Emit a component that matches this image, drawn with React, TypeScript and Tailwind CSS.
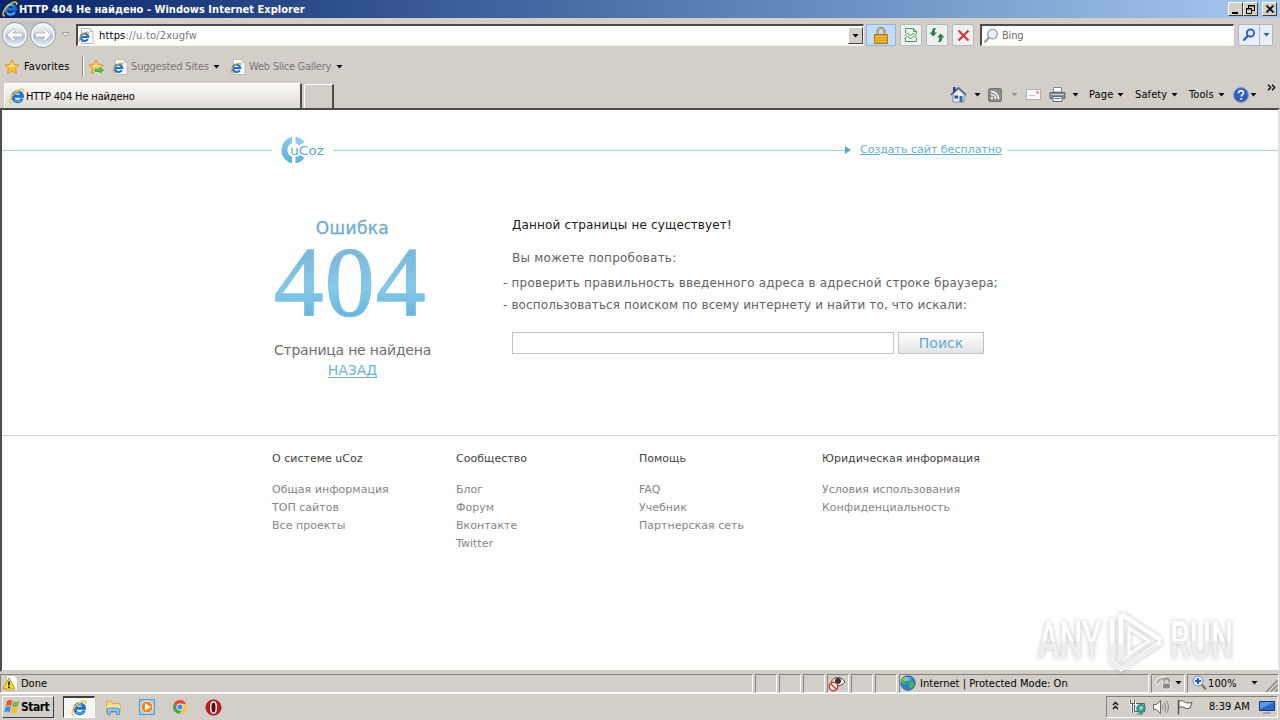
import React from 'react';
import clsx from 'clsx';

function Arrow({ className }: { className?: string }) {
  return (
    <svg width="7" height="4" viewBox="0 0 7 4" className={clsx('shrink-0', className)} fill="currentColor">
      <path d="M0.5 0h6L3.5 3.5z" />
    </svg>
  );
}

function IeLogo({ size = 16, className }: { size?: number; className?: string }) {
  return (
    <svg width={size} height={size} viewBox="0 0 16 16" fill="none" className={clsx('shrink-0', className)}>
      <path d="M13.200 10.500a4.900 4.900 0 1 1 .3-2.300H4.500" stroke="#1d6fd2" strokeWidth="3" />
      <path d="M12.300 11.600a4.600 4.600 0 0 1-7 .5M5 5.500a4.600 4.600 0 0 1 6-1" stroke="#5cc0fa" strokeWidth="1.200" />
      <path d="M2.800 15C.2 14.800.6 11.400 3.300 7.600 6.200 3.600 11.800.2 14 1.300c1.100.6.9 1.600.4 2.600" stroke="#f2c43a" strokeWidth="1.500" />
    </svg>
  );
}

function IePage() {
  return (
    <svg width="16" height="16" viewBox="0 0 16 16" fill="none" className="shrink-0">
      <path d="M3.500.5h8.500l3 3v12H3.500z" fill="#fff" stroke="#b4bccb" />
      <path d="M12 .5v3h3" stroke="#b4bccb" />
      <path d="M9.800 11a3.700 3.700 0 1 1 .4-2H3.600" stroke="#1c6fd0" strokeWidth="2.200" />
      <path d="M2 13.500c-1.800 0-1-2.800 1-5.200 2.200-2.800 5.800-4.600 7.300-4 .8.3.7 1.200.3 2" stroke="#e0a82c" strokeWidth="1.100" />
    </svg>
  );
}

function Star({ plus = false }: { plus?: boolean }) {
  return (
    <svg width="17" height="16" viewBox="0 0 17 16" className="shrink-0">
      <path
        d="M8 .8l2.200 4.700 5 .6-3.700 3.500 1 5.100L8 12.200l-4.500 2.500 1-5.100L.8 6.100l5-.6z"
        fill="#fcbf35"
        stroke="#dc9a2a"
        strokeLinejoin="round"
      />
      <path d="M8 3l1.300 3.300 3.200.4-6.500 1.500L4 6.700l2.800-.4z" fill="#fff0a0" />
      {plus && <path d="M6.500 9.500h5V7l5 4.200-5 4.300V13h-5z" fill="#58c850" stroke="#fff" strokeWidth=".8" />}
      {plus && <path d="M7 10h5V8.200l3.600 3-3.600 3.100v-1.800H7z" fill="none" stroke="#2c8c28" strokeWidth=".7" />}
    </svg>
  );
}

function NavCircle({ flip = false }: { flip?: boolean }) {
  return (
    <svg width="28" height="28" viewBox="0 0 28 28" className={clsx('shrink-0', flip && '-scale-x-100')}>
      <defs>
        <linearGradient id="nav" x1="0" y1="0" x2="0" y2="1">
          <stop offset="0" stopColor="#f4f7fb" />
          <stop offset=".45" stopColor="#d3dbe6" />
          <stop offset=".55" stopColor="#b0bfd2" />
          <stop offset="1" stopColor="#e2f3fc" />
        </linearGradient>
      </defs>
      <circle cx="14" cy="14" r="12.500" fill="#eceff4" stroke="#8d97a8" strokeWidth=".9" />
      <circle cx="14" cy="14" r="10.800" fill="url(#nav)" stroke="#fff" />
      <path d="M6 14l6.500-6.500 2 2-2.500 2.500H21.500v4H12l2.500 2.500-2 2z" fill="#fff" stroke="#a3afc0" strokeWidth=".8" />
    </svg>
  );
}

function CaptionButton({ children }: { children: React.ReactNode }) {
  return (
    <div className="flex h-[14px] w-[15px] items-center justify-center border border-t-white border-l-white border-r-[#404040] border-b-[#404040] bg-[#d4d0c8]">
      {children}
    </div>
  );
}

function ToolButton({ children }: { children: React.ReactNode }) {
  return (
    <div className="mr-1 flex h-[22px] w-[22px] items-center justify-center rounded-[2px] border border-[#b3b9c1] bg-[#eef1f3]">
      {children}
    </div>
  );
}

function TitleBar() {
  return (
    <div className="flex h-[18px] shrink-0 items-center bg-linear-to-r from-[#0a246a] to-[#a6caf0] pr-[3px] pl-[2px]">
      <IeLogo size={16} />
      <span className="ml-px grow pt-px text-[11px] font-bold tracking-[0.02px] whitespace-nowrap text-white">
        HTTP 404 Не найдено - Windows Internet Explorer
      </span>
      <CaptionButton>
        <span className="mt-[7px] mr-[2px] h-[2px] w-[6px] bg-black" />
      </CaptionButton>
      <CaptionButton>
        <svg width="9" height="9" viewBox="0 0 9 9" fill="none" stroke="#000">
          <path d="M2.500 3V.5h6v5H6M2 1h7M.5 3.500h5v5h-5zM0 4h6" />
        </svg>
      </CaptionButton>
      <div className="w-[4px]" />
      <CaptionButton>
        <svg width="8" height="8" viewBox="0 0 8 8" stroke="#000" strokeWidth="1.600">
          <path d="M.5.5l7 7M7.500.5l-7 7" />
        </svg>
      </CaptionButton>
    </div>
  );
}

function AddressRow() {
  return (
    <div className="flex h-[34px] shrink-0 items-center pl-[1px]">
      <div className="flex h-[28px] rounded-[14px] bg-linear-to-b from-[#bfc0c6] to-[#d4cec8] to-60%">
        <NavCircle />
        <NavCircle flip />
      </div>
      <svg width="9" height="6" viewBox="0 0 9 6" className="ml-[4px]" fill="#e8e6e2" stroke="#a5a29c">
        <path d="M1 .5h7L4.500 4.500z" />
      </svg>
      <div className="ml-[6px] flex h-[22px] w-[788px] items-center border-t-2 border-r border-b border-l-2 border-t-[#4b4b4b] border-r-[#f4f3f0] border-b-[#f4f3f0] border-l-[#4b4b4b] bg-white">
        <span className="w-[21px]">
          <IePage />
        </span>
        <span className="grow pt-px tracking-[0.2px] text-[#777]">
          <span className="text-black">https</span>://u.to/2xugfw
        </span>
        <span className="flex h-[17px] w-[15px] items-center justify-center border border-t-white border-l-white border-r-[#404040] border-b-[#404040] bg-[#d4d0c8]">
          <Arrow />
        </span>
      </div>
      <div className="mr-1 ml-[2px] flex h-[22px] w-[30px] items-center justify-center border border-[#8fb2e8] bg-[#c5dcfd]">
        <svg width="14" height="17" viewBox="0 0 14 17">
          <path d="M3.500 8V4.500a3.500 3.500 0 0 1 7 0V8" fill="none" stroke="#8a7a4a" strokeWidth="2.200" />
          <path d="M3.500 8V4.500a3.500 3.500 0 0 1 7 0V8" fill="none" stroke="#e8dcae" strokeWidth=".7" />
          <path d="M.5 7.500h13v9H.5z" fill="#dc9f1c" stroke="#b87b0c" />
          <path d="M1 9.500h12M1 12h12M1 14.500h12" stroke="#f6cb5c" strokeWidth=".8" />
        </svg>
      </div>
      <ToolButton>
        <svg width="14" height="16" viewBox="0 0 14 16" fill="none" stroke="#4c9a55">
          <path d="M1.500 6V1.500h8l3 3V7M1.500 11v3.500h11V12M9.500 1.500v3h3" />
          <path d="M.5 9l3-3 3 3 3-3 3.500 3.500M.5 12l3-3 3 3 3-3 3.500 3" />
        </svg>
      </ToolButton>
      <ToolButton>
        <svg width="16" height="14" viewBox="0 0 16 14" fill="#2f8040">
          <path d="M5 0h2.200C5.500 1.500 5.800 3 5.800 4.500H8L4.300 8.500 .5 4.500h2.300C2.800 2.500 3.200 1 5 0z" />
          <path d="M11 14H8.800c1.700-1.500 1.400-3 1.400-4.500H8l3.700-4 3.800 4h-2.300c0 2-.4 3.500-2.200 4.500z" />
        </svg>
      </ToolButton>
      <ToolButton>
        <svg width="13" height="13" viewBox="0 0 13 13" stroke="#d03a3e" strokeWidth="2.200">
          <path d="M1.500 1.500l10 10M11.500 1.500l-10 10" />
        </svg>
      </ToolButton>
      <div className="ml-[2px] flex h-[22px] w-[254px] items-center border-t-2 border-r border-b border-l-2 border-t-[#4b4b4b] border-r-[#f4f3f0] border-b-[#f4f3f0] border-l-[#4b4b4b] bg-white pl-[1px]">
        <svg width="16" height="16" viewBox="0 0 16 16" fill="none">
          <circle cx="9.500" cy="6" r="4.800" fill="#e8f0f8" stroke="#8e99a8" strokeWidth="1.300" />
          <path d="M6 9.500L1.500 14.500" stroke="#8e99a8" strokeWidth="2" />
        </svg>
        <span className="ml-[3px] pt-px tracking-[-0.2px] text-[#6d6d6d]">Bing</span>
      </div>
      <div className="ml-[4px] flex h-[22px] w-[35px] rounded-[2px] border border-[#a9b7cc] bg-[#e9eff8]">
        <span className="flex w-[21px] items-center justify-center border-r border-[#a9b7cc]">
          <svg width="14" height="14" viewBox="0 0 14 14" fill="none" stroke="#2757c8">
            <circle cx="8.500" cy="5" r="3.600" strokeWidth="1.800" fill="#dceaff" />
            <path d="M5.800 7.800L1.500 12.500" strokeWidth="2.200" />
          </svg>
        </span>
        <span className="flex grow items-center justify-center text-[#2566b8]">
          <Arrow />
        </span>
      </div>
    </div>
  );
}

function FavoritesRow() {
  return (
    <div className="flex h-[29px] shrink-0 items-center pl-1">
      <Star />
      <span className="ml-[3px] w-[58px] tracking-[0.1px]">Favorites</span>
      <span className="h-[20px] w-[2px] border-l border-r border-l-[#8f8b84] border-r-white" />
      <span className="ml-[4px] w-[24px]">
        <Star plus />
      </span>
      <IePage />
      <span className="ml-[3px] w-[82px] pt-px tracking-[-0.15px] whitespace-nowrap text-[#7b7874]">Suggested Sites</span>
      <Arrow />
      <span className="ml-[10px]">
        <IePage />
      </span>
      <span className="ml-[3px] w-[87px] pt-px tracking-[-0.25px] whitespace-nowrap text-[#7b7874]">Web Slice Gallery</span>
      <Arrow />
    </div>
  );
}

function CommandBar() {
  return (
    <div className="flex h-[27px] items-center">
      <svg width="17" height="17" viewBox="0 0 17 17" className="shrink-0">
        <path d="M3 8v8h11V8L8.500 3z" fill="#e9eefa" stroke="#7d8cae" />
        <path d="M.8 9L8.500 1.800 16.200 9" fill="none" stroke="#4a64a0" strokeWidth="1.600" />
        <path d="M3 1h2.500v4L3 7z" fill="#2b3c80" />
        <path d="M9.500 10h3v6h-3z" fill="#2f6f9c" />
        <path d="M4.500 9.500h3.500v3H4.500z" fill="#304a80" />
      </svg>
      <Arrow className="ml-[7px]" />
      <svg width="14" height="14" viewBox="0 0 14 14" className="ml-[7px] shrink-0" fill="none" stroke="#fff">
        <rect x=".5" y=".5" width="13" height="13" rx="1.500" fill="#8d8d8d" stroke="#747474" />
        <path d="M3 6.500A4.500 4.500 0 0 1 7.500 11M3 3.500A7.500 7.500 0 0 1 10.500 11" strokeWidth="1.500" />
        <circle cx="4" cy="10" r=".7" fill="#fff" />
      </svg>
      <Arrow className="ml-[9px] text-[#98948d]" />
      <svg width="15" height="11" viewBox="0 0 15 11" className="ml-[8px] shrink-0">
        <path d="M.5.5h14v10H.5z" fill="#fafafa" stroke="#b0aeb0" />
        <path d="M10.500 2.500h2v2h-2z" fill="#d0605c" />
        <path d="M3 6.500h6" stroke="#c4c4c8" />
      </svg>
      <svg width="17" height="15" viewBox="0 0 17 15" className="ml-[8px] shrink-0">
        <path d="M4.500.5h8V5h-8z" fill="#fff" stroke="#888" />
        <path d="M1 5.500h15v6H1z" fill="#8a8e95" stroke="#62666e" />
        <path d="M2 7.500h13" stroke="#c9ccd2" />
        <path d="M4 9.500h9v5H4z" fill="#fff" stroke="#666" />
        <path d="M5.500 11.500h6" stroke="#3972c0" />
      </svg>
      <Arrow className="ml-[6px]" />
      <span className="ml-[10px] w-[28px] tracking-[0.15px]">Page</span>
      <Arrow />
      <span className="ml-[11px] w-[36px] tracking-[0.1px]">Safety</span>
      <Arrow />
      <span className="ml-[11px] w-[29px] tracking-[0.1px]">Tools</span>
      <Arrow />
      <svg width="16" height="16" viewBox="0 0 16 16" className="ml-[8px] shrink-0" fill="none">
        <circle cx="8" cy="8" r="7.400" fill="#2f5fc4" stroke="#8095c4" />
        <path d="M5.500 6.300C5.500 2.800 10.800 3 10.500 6c-.2 1.600-2.300 1.600-2.300 3.600" stroke="#fff" strokeWidth="1.700" />
        <circle cx="8.200" cy="12" r="1.100" fill="#fff" />
      </svg>
      <Arrow className="ml-[1px]" />
      <svg width="9" height="7" viewBox="0 0 9 7" className="mb-[14px] ml-[10px] shrink-0" fill="none" stroke="#000" strokeWidth="1.300">
        <path d="M1 .8l2.700 2.700L1 6.200M5 .8l2.700 2.700L5 6.200" />
      </svg>
    </div>
  );
}

function TabRow() {
  return (
    <div className="flex h-[27px] shrink-0 items-end pl-1">
      <div className="flex h-[25px] w-[298px] items-center border-t border-r-2 border-l border-t-white border-r-[#4b4b4b] border-l-white bg-linear-to-b from-[#fbfaf9] to-[#dedad5] pl-[4px]">
        <IeLogo size={16} />
        <span className="ml-px pt-px tracking-[-0.15px] whitespace-nowrap">HTTP 404 Не найдено</span>
      </div>
      <div className="ml-[2px] h-[24px] w-[30px] border-t border-r-2 border-l border-t-white border-r-[#4b4b4b] border-l-white" />
      <div className="ml-auto w-[330px]">
        <CommandBar />
      </div>
    </div>
  );
}

function UcozLogo() {
  return (
    <svg width="44" height="28" viewBox="0 0 44 28" fill="none">
      <defs>
        <linearGradient id="ring" x1="0" y1="0" x2="0" y2="1">
          <stop offset="0" stopColor="#8fcdea" />
          <stop offset="1" stopColor="#5aaed6" />
        </linearGradient>
      </defs>
      <path d="M11 .8v6.500a7.200 7.200 0 0 0 0 13.400v6.500A13.500 13.500 0 0 1 11 .8z" fill="url(#ring)" />
      <path d="M14.500.8c4 .4 7 2.600 9 5.800l-5.500 3a8 8 0 0 0-3.500-2.500z" fill="#8accea" />
      <path d="M14.500 27.200c4-.4 7-2.600 9-5.800l-5.500-3a8 8 0 0 1-3.500 2.500z" fill="#66b6dc" />
      <text x="9" y="18.500" fontSize="13" fill="#5fa8d3" stroke="#fff" strokeWidth="2.500" paintOrder="stroke" textLength="34" lengthAdjust="spacingAndGlyphs" fontFamily="DejaVu Sans">
        uCoz
      </text>
    </svg>
  );
}

const footerColumns = [
  { title: 'О системе uCoz', width: 'w-[184px]', links: ['Общая информация', 'ТОП сайтов', 'Все проекты'] },
  { title: 'Сообщество', width: 'w-[183px]', links: ['Блог', 'Форум', 'Вконтакте', 'Twitter'] },
  { title: 'Помощь', width: 'w-[183px]', links: ['FAQ', 'Учебник', 'Партнерская сеть'] },
  { title: 'Юридическая информация', width: 'w-[200px]', links: ['Условия использования', 'Конфиденциальность'] },
];

function ErrorPage() {
  return (
    <div className="font-['DejaVu_Sans',sans-serif]">
      <header className="flex h-[40px] items-center">
        <span className="h-px w-[270px] bg-[#a5d3e8]" />
        <span className="mr-[8px] ml-[9px]">
          <UcozLogo />
        </span>
        <span className="h-px w-[512px] bg-[#a5d3e8]" />
        <svg width="6" height="8" viewBox="0 0 6 8" fill="#5ba9cf">
          <path d="M0 0l6 4-6 4z" />
        </svg>
        <a className="mr-[5px] ml-[9px] w-[142px] text-[11px] whitespace-nowrap text-[#5fb0d5] underline underline-offset-1">
          Создать сайт бесплатно
        </a>
        <span className="h-px grow bg-[#a5d3e8]" />
      </header>

      <main className="flex h-[265px] pt-[46px] pl-[270px]">
        <div className="flex w-[161px] shrink-0 flex-col items-center">
          <div className="h-[20px] text-[17px] leading-[24px] tracking-[0.35px] text-[#6fabcf] [-webkit-text-stroke:0.3px_#6fabcf]">Ошибка</div>
          <div className="mr-[4px] h-[104px] bg-linear-to-b from-[#7fb9dc] from-20% via-[#85cae9] via-50% to-[#64b4dc] to-80% bg-clip-text font-['Liberation_Serif',serif] text-[99px] leading-[92px] tracking-[1.500px] text-transparent [-webkit-text-stroke:1px_#7cc2e4]">
            404
          </div>
          <div className="text-[14px] leading-[20px] tracking-[-0.22px] whitespace-nowrap text-[#6e6e6e]">Страница не найдена</div>
          <a className="text-[14px] leading-[20px] text-[#6db3d6] underline underline-offset-2">НАЗАД</a>
        </div>
        <div className="ml-[70px] text-[12px] whitespace-nowrap text-[#636363]">
          <p className="ml-[9px] h-[33px] leading-[18px] tracking-[0.15px] text-[#1a1a1a]">Данной страницы не существует!</p>
          <p className="ml-[9px] h-[25px] leading-[18px] tracking-[0.22px]">Вы можете попробовать:</p>
          <p className="h-[22px] leading-[18px] tracking-[0.2px]">- проверить правильность введенного адреса в адресной строке браузера;</p>
          <p className="h-[36px] leading-[18px] tracking-[0.12px]">- воспользоваться поиском по всему интернету и найти то, что искали:</p>
          <div className="ml-[9px] flex">
            <input className="h-[22px] w-[382px] border border-[#c3c3c3] bg-white" />
            <button className="ml-1 h-[22px] w-[86px] border border-[#c3c3c3] bg-linear-to-b from-white to-[#e4e4e4] text-[14px] leading-[20px] text-[#5fa9cf]">
              Поиск
            </button>
          </div>
        </div>
      </main>

      <footer className="flex border-t border-[#d5d5d5] pt-[14px] pl-[270px] text-[11px] leading-[18px] tracking-[0.02px] text-[#858585]">
        {footerColumns.map((col) => (
          <div key={col.title} className={clsx('shrink-0 whitespace-nowrap', col.width)}>
            <div className="mb-[13px] text-[#3f3f3f]">{col.title}</div>
            {col.links.map((link) => (
              <div key={link}>{link}</div>
            ))}
          </div>
        ))}
      </footer>
    </div>
  );
}

function Watermark() {
  return (
    <div className="absolute top-[498px] right-[38px] flex h-[66px] w-[202px] items-center drop-shadow-[0_0_2px_rgba(0,0,0,0.25)]">
      <span className="w-[70px]">
        <span className="inline-block origin-left scale-x-[0.62] bg-linear-to-b from-white from-50% to-[#efefef] to-50% bg-clip-text font-['Roboto',sans-serif] text-[52px] leading-[54px] font-medium text-transparent">
          ANY
        </span>
      </span>
      <svg width="58" height="62" viewBox="0 0 58 62" className="shrink-0" fill="none" stroke="#fff" strokeWidth="5" strokeLinejoin="round">
        <path d="M4 9v42l9 8L53 32M13 4v46M13 4l40 26" />
        <path d="M21 18v26l20-13z" strokeWidth="3" />
        <path d="M4 33v19l9 6 38-23M13 34v16" stroke="#efefef" strokeWidth="4" />
      </svg>
      <span className="ml-[4px] w-[66px]">
        <span className="inline-block origin-left scale-x-[0.61] bg-linear-to-b from-white from-50% to-[#efefef] to-50% bg-clip-text font-['Roboto',sans-serif] text-[52px] leading-[54px] font-medium text-transparent">
          RUN
        </span>
      </span>
    </div>
  );
}

function StatusCell({ className, children }: { className?: string; children?: React.ReactNode }) {
  return (
    <div className={clsx('mr-[2px] flex h-[19px] shrink-0 items-center border border-t-[#87837c] border-r-white border-b-white border-l-[#87837c]', className)}>
      {children}
    </div>
  );
}

function StatusBar() {
  return (
    <div className="flex h-[22px] shrink-0 items-center border-b border-white pt-px">
      <StatusCell className="w-[753px]">
        <svg width="17" height="17" viewBox="0 0 17 17" className="mx-[1px]">
          <path d="M4.500.5h8l3 3v12h-11z" fill="#fff" stroke="#c2c2c2" />
          <path d="M7 3l6 11H1z" fill="#ffe02e" stroke="#b8950a" />
          <path d="M7 6.500v4M7 11.500v1.500" stroke="#000" strokeWidth="1.500" />
        </svg>
        <span className="ml-px pt-px">Done</span>
      </StatusCell>
      <StatusCell className="w-[22px]" />
      <StatusCell className="w-[22px]" />
      <StatusCell className="w-[22px]" />
      <StatusCell className="w-[22px]">
        <svg width="18" height="17" viewBox="0 0 18 17" fill="none">
          <path d="M3 7c3-6 10-6 14 0-4 5-10 5-14 0z" fill="#fff" stroke="#444" />
          <circle cx="10" cy="6" r="3" fill="#3a3030" />
          <circle cx="5.500" cy="11.500" r="4.300" fill="#fff" stroke="#d4342c" strokeWidth="1.500" />
          <path d="M2.500 8.500l6 6" stroke="#d4342c" strokeWidth="1.500" />
        </svg>
      </StatusCell>
      <StatusCell className="w-[22px]" />
      <StatusCell className="w-[22px]" />
      <StatusCell className="w-[250px]">
        <svg width="16" height="16" viewBox="0 0 16 16">
          <circle cx="8" cy="8" r="7.300" fill="#2f7fd0" stroke="#255a94" strokeWidth=".7" />
          <path d="M3 3c3-2 6-1 5 1S5 6 5.500 8 3 9 1.500 8 1.500 4.500 3 3zM9 7c3-2 5 0 5.500 1 0 3-3 5.500-5 6-1-2 1-3 0-4s-1.500-2-.5-3z" fill="#42b850" />
          <ellipse cx="7" cy="4" rx="4" ry="2" fill="#fff" opacity=".35" />
        </svg>
        <span className="ml-[4px] pt-px tracking-[0.03px] whitespace-nowrap">Internet | Protected Mode: On</span>
      </StatusCell>
      <StatusCell className="w-[34px] justify-end">
        <svg width="18" height="16" viewBox="0 0 18 16" className="mr-[3px]" fill="none">
          <path d="M1 8c2-5 7-7 11-6l-1 4C8 5 5 7 4 10z" fill="#b3b3b3" stroke="#fff" />
          <path d="M10 8V6a2.500 2.500 0 0 1 5 0v2" stroke="#888" strokeWidth="1.300" />
          <path d="M8.500 8h8v6h-8z" fill="#8b8b8b" stroke="#eee" />
        </svg>
        <Arrow className="mr-[2px]" />
      </StatusCell>
      <StatusCell className="w-[92px] border-r-transparent">
        <svg width="16" height="16" viewBox="0 0 16 16" className="ml-[4px]" fill="none">
          <path d="M9.500 9.500l4.500 5" stroke="#8c7a50" strokeWidth="2.500" />
          <circle cx="6" cy="6" r="5" fill="#f0f6ff" stroke="#6d8cc4" />
          <path d="M6 3v6M3 6h6" stroke="#1b62d0" strokeWidth="2" />
        </svg>
        <span className="w-[42px] pt-px tracking-[0.1px]">100%</span>
        <Arrow className="ml-[1px]" />
        <svg width="12" height="12" viewBox="0 0 12 12" className="mt-[5px] ml-[8px]" stroke="#87837c" strokeWidth="1.500">
          <path d="M0 12L12 0M4.500 12L12 4.500M9 12l3-3" />
        </svg>
      </StatusCell>
    </div>
  );
}

function Taskbar() {
  return (
    <div className="flex h-[26px] shrink-0 items-center pl-[2px]">
      <div className="flex h-[22px] w-[52px] items-center border border-t-white border-r-[#404040] border-b-[#404040] border-l-white">
        <svg width="17" height="16" viewBox="0 0 17 16" className="ml-px shrink-0">
          <path d="M3 2c2-1.300 3.500-1.200 5.200-.2L7 7C5.300 6 3.800 6 1.800 7z" fill="#e8582a" />
          <path d="M9.200 2.200c2 1 3.800.9 6-.2L14 7.200c-2 1-4 1.100-6 .2z" fill="#7cb83c" />
          <path d="M1.500 8C3.500 7 5 7 6.800 8l-1.200 5.200c-1.700-1-3.300-1-5.200-.1z" fill="#3f8fdc" />
          <path d="M7.800 8.400c2 .9 3.900.8 6-.2l-1.200 5.200c-2 1-4 1.100-6 .2z" fill="#f5bf2c" />
        </svg>
        <span className="text-[12px] font-bold tracking-[-0.5px]">Start</span>
      </div>
      <div className="ml-[9px] flex h-[22px] w-[32px] items-center justify-center border-t-2 border-r border-b border-l border-t-[#404040] border-r-white border-b-white border-l-[#404040] bg-[#f7f6f5]">
        <IeLogo size={16} />
      </div>
      <svg width="17" height="16" viewBox="0 0 17 16" className="ml-[10px]">
        <path d="M1.500 2.500h5l1.500 2h7v9H1.500z" fill="#f2d678" stroke="#d0ac50" />
        <path d="M2 6.500h13V11H2z" fill="#faeaae" />
        <path d="M2.500 15.500v-5c0-1 .5-1.500 1.500-1.500h9c1 0 1.500.5 1.500 1.500v5h-3v-3h-6v3z" fill="#8cc4ec" stroke="#5596c8" />
      </svg>
      <svg width="16" height="16" viewBox="0 0 16 16" className="ml-[17px]">
        <path d="M.5.5h15v15H.5z" fill="#9cc9ee" stroke="#5a9ad2" />
        <circle cx="8" cy="8" r="6" fill="#f0861c" stroke="#fff" strokeWidth=".8" />
        <path d="M6 4.500v7L12 8z" fill="#fff" />
      </svg>
      <svg width="16" height="16" viewBox="0 0 16 16" className="ml-[17px]">
        <circle cx="8" cy="8" r="6.800" fill="#fbc52d" />
        <path d="M2 4.500A6.800 6.800 0 0 1 14 4.700H8L5 9.500z" fill="#e2453a" />
        <path d="M2 4.500A6.800 6.800 0 0 0 7.500 14.800L10.500 10 5.500 9.500z" fill="#3fa757" />
        <circle cx="8" cy="8" r="3.200" fill="#4886ea" stroke="#fff" />
      </svg>
      <svg width="17" height="17" viewBox="0 0 17 17" className="ml-[17px]">
        <circle cx="8.500" cy="8.500" r="7.700" fill="#c0181c" stroke="#8c0f12" strokeWidth=".6" />
        <ellipse cx="8.500" cy="8.500" rx="2.800" ry="5.700" fill="#5e0808" stroke="#fff" strokeWidth="1.500" />
      </svg>

      <div className="mr-[2px] ml-auto flex h-[22px] w-[172px] items-center border border-t-[#87837c] border-r-white border-b-white border-l-[#87837c]">
        <svg width="7" height="9" viewBox="0 0 7 9" className="mb-[3px] ml-[5px]" fill="none" stroke="#000" strokeWidth="1.300">
          <path d="M1 4l2.500-2.500L6 4M1 8l2.500-2.500L6 8" />
        </svg>
        <svg width="17" height="16" viewBox="0 0 17 16" className="ml-[10px]" fill="none">
          <path d="M5.500 4.500h10v8h-10z" fill="#dfe8ee" stroke="#586068" />
          <path d="M8 15h6" stroke="#586068" />
          <path d="M1.500.5v4h4v-4M3.500 4.500V14" stroke="#fff" strokeWidth="2.500" />
          <path d="M1.500.5v4h4v-4M3.500 4.500V14" stroke="#555" />
          <circle cx="12" cy="9.500" r="4.300" fill="#3a9c90" stroke="#1f6e70" strokeWidth=".7" />
          <path d="M10 9c2-3 4-2 4 0s-3 3-4 0z" fill="#86dcc0" />
        </svg>
        <svg width="18" height="16" viewBox="0 0 18 16" className="ml-[6px]" fill="none">
          <path d="M1.500 5.500h3L8.500 1.500v13L4.500 10.500h-3z" fill="#fff" stroke="#666" />
          <path d="M10.500 5.500q1.500 2.500 0 5M12.500 3.500q3 4.500 0 9M14.500 1.800q4 6.200 0 12.400" stroke="#888" />
        </svg>
        <svg width="17" height="16" viewBox="0 0 17 16" className="ml-[7px]" fill="#fff" stroke="#555">
          <path d="M1.500 1v14.500" strokeWidth="1.500" />
          <path d="M2 2c3-1 4 0 5.500 1s4 1.500 7.500.5L13 9c-3 1-4.500.5-6-.5S4 7.500 2 8.500z" />
        </svg>
        <span className="ml-[15px] w-[50px] whitespace-nowrap">8:39 AM</span>
        <svg width="16" height="14" viewBox="0 0 16 14">
          <path d="M.5 1.500h15v9H.5z" fill="#2c66c8" stroke="#16387c" />
          <path d="M1 2h14L1 9z" fill="#5d97e8" />
          <path d="M4 13h8" stroke="#8c99b0" strokeWidth="1.500" />
        </svg>
      </div>
    </div>
  );
}

export default function App() {
  return (
    <div className="flex h-[720px] w-[1280px] flex-col overflow-hidden bg-[#d4cec8] font-['DejaVu_Sans_Condensed','DejaVu_Sans',sans-serif] text-[11px] leading-[14px] text-black">
      <TitleBar />
      <AddressRow />
      <FavoritesRow />
      <TabRow />
      <div className="relative h-[564px] shrink-0 border-t-2 border-r-2 border-b-2 border-l-2 border-t-[#4b4b4b] border-r-[#e6e3df] border-b-[#d4cec8] border-l-[#4b4b4b] bg-white pt-[20px]">
        <ErrorPage />
        <Watermark />
      </div>
      <StatusBar />
      <Taskbar />
    </div>
  );
}
